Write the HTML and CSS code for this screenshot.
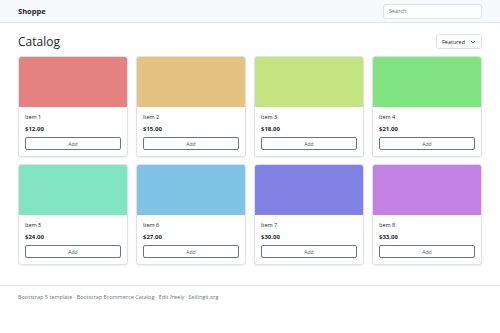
FILE: index.html
```html
<!DOCTYPE html>
<html>
<head>
	<meta charset="utf-8">
	<meta name="viewport" content="width=device-width">
	<title>Shoppe</title>
	<link rel="stylesheet" href="styles.css">
</head>
<body>
	<nav class="topbar">
		<span class="brand">Shoppe</span>
		<input class="search" type="text" placeholder="Search">
	</nav>
	<main class="catalog">
		<div class="catalog-head">
			<h1>Catalog</h1>
			<div class="sort">Featured <svg width="6" height="4" viewBox="0 0 6 4"><path d="M1 1l2 2 2-2" fill="none" stroke="#555" stroke-width="0.8"/></svg></div>
		</div>
		<section class="grid">
			<div class="card"><div class="thumb c1"></div><div class="card-body"><div class="name">Item 1</div><div class="price">$12.00</div><button>Add</button></div></div>
			<div class="card"><div class="thumb c2"></div><div class="card-body"><div class="name">Item 2</div><div class="price">$15.00</div><button>Add</button></div></div>
			<div class="card"><div class="thumb c3"></div><div class="card-body"><div class="name">Item 3</div><div class="price">$18.00</div><button>Add</button></div></div>
			<div class="card"><div class="thumb c4"></div><div class="card-body"><div class="name">Item 4</div><div class="price">$21.00</div><button>Add</button></div></div>
			<div class="card"><div class="thumb c5"></div><div class="card-body"><div class="name">Item 5</div><div class="price">$24.00</div><button>Add</button></div></div>
			<div class="card"><div class="thumb c6"></div><div class="card-body"><div class="name">Item 6</div><div class="price">$27.00</div><button>Add</button></div></div>
			<div class="card"><div class="thumb c7"></div><div class="card-body"><div class="name">Item 7</div><div class="price">$30.00</div><button>Add</button></div></div>
			<div class="card"><div class="thumb c8"></div><div class="card-body"><div class="name">Item 8</div><div class="price">$33.00</div><button>Add</button></div></div>
		</section>
	</main>
	<footer class="foot">Bootstrap 5 template · Bootstrap Ecommerce Catalog · Edit freely · Sellingit.org</footer>
</body>
</html>
```

FILE: styles.css
```css
html, body {
	margin: 0;
	padding: 0;
	background: #fff;
	color: #212529;
	font-family: "Open Sans", "Noto Sans", sans-serif;
}

.topbar {
	height: 23px;
	box-sizing: border-box;
	padding: 0 18px;
	display: flex;
	align-items: center;
	justify-content: space-between;
	background: #f8f9fa;
	border-bottom: 1px solid #e3e5e8;
}
.brand {
	font-size: 7.5px;
	font-weight: 700;
}
.search {
	width: 99px;
	height: 15px;
	box-sizing: border-box;
	padding: 0 5px;
	font-family: inherit;
	font-size: 5.5px;
	border: 1px solid #dee2e6;
	border-radius: 3px;
	background: #fff;
	outline: none;
}
.search::placeholder {
	color: #6c757d;
}

.catalog {
	padding: 0 18px;
	margin-bottom: 20px;
}
.catalog-head {
	display: flex;
	align-items: center;
	justify-content: space-between;
	margin-top: 10px;
	margin-bottom: 6px;
	height: 17px;
}
h1 {
	margin: 0;
	font-size: 12px;
	font-weight: 500;
}
.sort {
	width: 46px;
	height: 15px;
	box-sizing: border-box;
	padding: 0 5px;
	display: flex;
	align-items: center;
	justify-content: space-between;
	font-size: 5.5px;
	border: 1px solid #dee2e6;
	border-radius: 3px;
}

.grid {
	display: grid;
	grid-template-columns: repeat(4, 1fr);
	gap: 7px 8px;
}
.card {
	border: 1px solid #dee2e6;
	border-radius: 3px;
	overflow: hidden;
	box-shadow: 0 1px 2px rgba(0,0,0,0.07);
	background: #fff;
}
.thumb {
	height: 50px;
}
.c1 { background: hsl(0, 65%, 70%); }
.c2 { background: hsl(40, 65%, 70%); }
.c3 { background: hsl(80, 65%, 70%); }
.c4 { background: hsl(120, 65%, 70%); }
.c5 { background: hsl(160, 65%, 70%); }
.c6 { background: hsl(200, 65%, 70%); }
.c7 { background: hsl(240, 65%, 70%); }
.c8 { background: hsl(280, 65%, 70%); }

.card-body {
	padding: 6px 6px 6px;
	display: flex;
	flex-flow: column;
}
.name {
	font-size: 5.5px;
	line-height: 8px;
}
.price {
	margin-top: 4px;
	font-size: 6px;
	font-weight: 700;
	line-height: 8px;
}
button {
	margin-top: 4px;
	height: 13px;
	padding: 0;
	font-family: inherit;
	font-size: 5px;
	color: #495057;
	background: #fff;
	border: 1px solid #6c757d;
	border-radius: 2px;
}

.foot {
	border-top: 1px solid #e3e5e8;
	padding: 7px 18px;
	font-size: 5.5px;
	line-height: 8px;
	color: #6c757d;
}
```
